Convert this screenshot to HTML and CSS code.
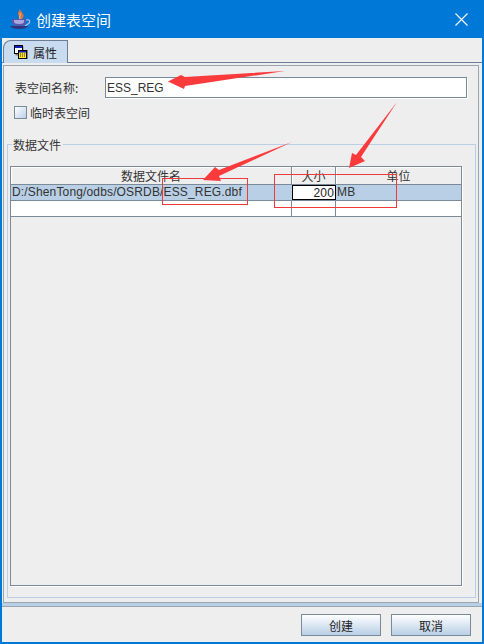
FILE: index.html
```html
<!DOCTYPE html>
<html lang="zh-CN">

<head>
    <meta charset="UTF-8">
    <meta name="viewport" content="width=device-width, initial-scale=1.0">
    <title>创建表空间</title>
    <link rel="stylesheet" href="styles.css">
</head>

<body>
    <div class="window">
        <div class="titlebar">
            <svg class="app-icon" width="22" height="22" viewBox="0 0 22 22">
                <path d="M10 1c2 2-2 3-1 5s1 3 1 5h3c2-2 2-4 1-5s-1-3-4-5z" fill="#d9743f"/>
                <path d="M11 5c1 2-1 3 0 6" stroke="#f2c0a0" fill="none"/>
                <path d="M3 11h14v3c0 3-3 4-7 4s-7-1-7-4z" fill="#5a58a8"/>
                <path d="M5 12h10v2c0 1-2 2-5 2s-5-1-5-2z" fill="#a8a8e0"/>
                <path d="M17 12c4-1 5 2 2 4l-3 2" stroke="#c0c4f0" stroke-width="1.200" fill="none"/>
                <path d="M1 18h18c-1 2-4 3-9 3s-8-1-9-3z" fill="#34347c"/>
            </svg>
            <span class="title">创建表空间</span>
            <svg class="close-icon" width="13" height="13" viewBox="0 0 13 13">
                <path d="M0.500 0.500l12 12M12.500 0.500l-12 12" stroke="#fff" stroke-width="1.100"/>
            </svg>
        </div>

        <div class="tabs">
            <div class="tab">
                <svg width="14" height="14" viewBox="0 0 14 14">
                    <rect x="1.500" y="1.500" width="8" height="9" fill="#808080"/>
                    <rect x="0.500" y="0.500" width="8" height="8" fill="#fff" stroke="#000"/>
                    <rect x="1" y="1" width="7" height="2" fill="#1020c0"/>
                    <rect x="5" y="5" width="9" height="9" fill="#808080"/>
                    <rect x="4.500" y="5.500" width="8" height="8" fill="#ffe030" stroke="#000"/>
                    <rect x="5" y="6" width="7" height="1.500" fill="#1020c0"/>
                    <path d="M6 9h6M6 11h6" stroke="#333" stroke-dasharray="1 1"/>
                </svg>
                <span>属性</span>
            </div>
        </div>

        <div class="pane">
            <div class="pane-inner">
                <div class="name-row">
                    <label>表空间名称:</label>
                    <div class="text-field">ESS_REG</div>
                </div>
                <div class="check-row">
                    <span class="checkbox"></span>
                    <span>临时表空间</span>
                </div>

                <fieldset class="group">
                    <legend>数据文件</legend>
                    <div class="table-box">
                        <div class="row head">
                            <div class="cell c-name">数据文件名</div>
                            <div class="cell c-size">大小</div>
                            <div class="cell c-unit">单位</div>
                        </div>
                        <div class="row selected">
                            <div class="cell c-name">D:/ShenTong/odbs/OSRDB/ESS_REG.dbf</div>
                            <div class="cell c-size editing">200</div>
                            <div class="cell c-unit">MB</div>
                        </div>
                        <div class="row last">
                            <div class="cell c-name"></div>
                            <div class="cell c-size"></div>
                            <div class="cell c-unit"></div>
                        </div>
                    </div>
                </fieldset>
            </div>
        </div>

        <div class="footer">
            <button class="btn">创建</button>
            <button class="btn">取消</button>
        </div>
    </div>

    <!-- annotations drawn on top of the screenshot -->
    <svg class="marks" width="484" height="644" viewBox="0 0 484 644">
        <rect x="162.500" y="178.500" width="85" height="26" fill="none" stroke="#f03a3a" stroke-width="1"/>
        <rect x="274.500" y="174.500" width="122" height="33" fill="none" stroke="#f03a3a" stroke-width="1"/>
        <path d="M285 71L185 77L181 75L168 81.500L184 89L185 86z" fill="#fb3a3c"/>
        <path d="M292 142L219 170L215 167L203 180L221 181L219 176z" fill="#fb3a3c"/>
        <path d="M397 102L356 155L352 153L349 168L365 161L361 157z" fill="#fb3a3c"/>
    </svg>
</body>

</html>
```

FILE: styles.css
```css
* {
    box-sizing: border-box;
}

body {
    margin: 0;
    width: 484px;
    height: 644px;
    overflow: hidden;
    font-family: "Noto Sans CJK SC", "Liberation Sans", sans-serif;
    font-size: 12px;
    color: #333;
    background: #eee;
}

.window {
    height: 644px;
    display: flex;
    flex-direction: column;
    border-left: 2px solid #0078d7;
    border-right: 2px solid #0078d7;
    border-bottom: 2px solid #0078d7;
}

.titlebar {
    height: 38px;
    margin: 0 -2px;
    padding: 0 16px 0 9px;
    flex: none;
    display: flex;
    align-items: center;
    background: #0078d7;
    color: #fff;
}

.app-icon {
    margin-right: 5px;
}

.title {
    flex: 1;
    font-size: 15px;
}

.tabs {
    height: 25px;
    flex: none;
    padding: 2px 0 0 1px;
    border-bottom: 1px solid #6a7f95;
}

.tab {
    width: 65px;
    height: 23px;
    display: flex;
    align-items: center;
    gap: 5px;
    padding-left: 10px;
    background: #c8dbef;
    border: 1px solid #6a7f95;
    border-bottom: none;
    border-top-left-radius: 8px;
    color: #222;
}

.pane {
    height: 543px;
    flex: none;
    padding: 2px 3px 0 1px;
    border-bottom: 3px solid #b8cfe5;
}

.pane-inner {
    height: 100%;
    padding: 11px 2px 0 3px;
    background: #eee;
    border: 1px solid #9aa5b0;
}

.name-row {
    display: flex;
    align-items: center;
    height: 21px;
    padding-left: 8px;
}

.name-row label {
    width: 90px;
}

.text-field {
    width: 362px;
    height: 21px;
    padding: 2px 0 0 1px;
    font-family: "Liberation Sans", sans-serif;
    font-size: 12px;
    line-height: 17px;
    background: #fff;
    border: 1px solid #7a8a99;
    box-shadow: 1px 1px 0 #fff;
}

.check-row {
    display: flex;
    align-items: center;
    gap: 3px;
    height: 20px;
    margin-top: 4px;
    padding-left: 7px;
}

.checkbox {
    width: 13px;
    height: 13px;
    border: 1px solid #7a8a99;
    background: linear-gradient(135deg, #fff, #bcd0e6);
}

.group {
    width: 469px;
    height: 462px;
    margin: 14px 0 0;
    padding: 13px 0 0 2px;
    border: 1px solid #b8cfe5;
}

.group legend {
    padding: 0 2px 0 1px;
    margin-left: 2px;
    font-size: 12px;
    line-height: 17px;
}

.table-box {
    width: 452px;
    height: 420px;
    background: #eee;
    border: 1px solid #7a8a99;
    box-shadow: 1px 1px 0 #fff;
}

.row {
    display: flex;
    height: 16px;
    border-bottom: 1px solid #7a8a99;
    background: #fff;
}

.row.head {
    height: 18px;
    background: #eee;
}

.row.selected {
    background: #b8cfe5;
}

.cell {
    border-right: 1px solid #7a8a99;
    font-family: "Liberation Sans", sans-serif;
    font-size: 12px;
    line-height: 14px;
    letter-spacing: 0.15px;
    padding: 0 1px;
    white-space: nowrap;
    overflow: hidden;
}

.head .cell {
    font-family: "Noto Sans CJK SC", sans-serif;
    padding-top: 1px;
    line-height: 16px;
    letter-spacing: 0;
    text-align: center;
    box-shadow: inset 1px 1px 0 #fff;
}

.c-name {
    width: 281px;
}

.c-size {
    width: 44px;
}

.c-unit {
    flex: 1;
    border-right: none;
}

.selected .c-name {
    border-right-color: transparent;
}

.editing {
    background: #fff;
    border: 1px solid #000;
    text-align: right;
    color: #222;
}

.footer {
    flex: 1;
    display: flex;
    justify-content: flex-end;
    align-items: center;
    gap: 10px;
    padding: 1px 11px 0 0;
    border-top: 1px solid #9aa5b0;
}

.btn {
    width: 80px;
    height: 22px;
    padding: 0;
    font-family: "Noto Sans CJK SC", sans-serif;
    font-size: 12px;
    color: #222;
    background: linear-gradient(#fff, #e6eef7 35%, #b8cfe5);
    border: 1px solid #7a8a99;
}

.marks {
    position: absolute;
    top: 0;
    left: 0;
    pointer-events: none;
}
```
